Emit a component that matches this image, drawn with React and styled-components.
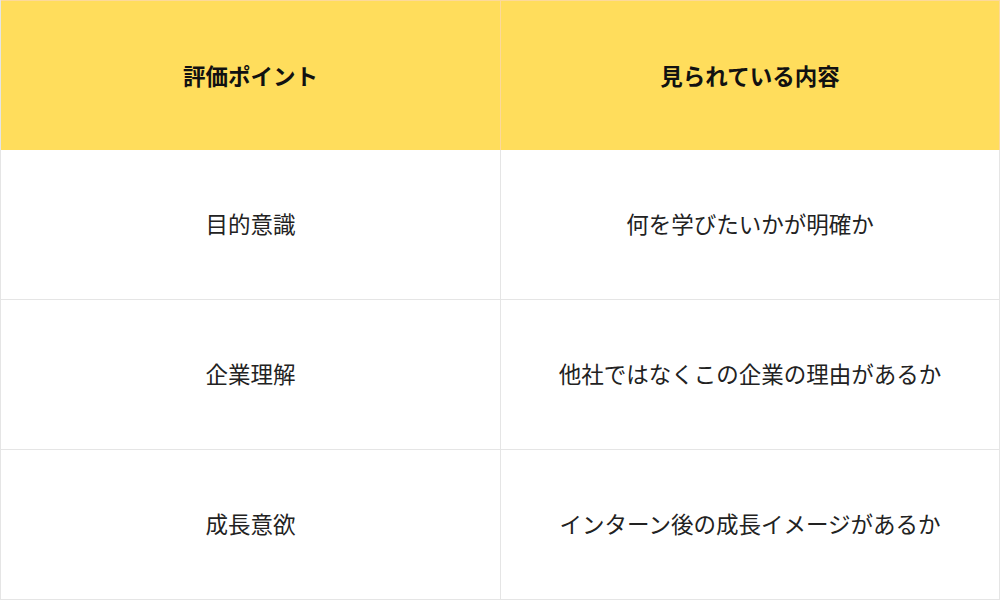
import React from 'react'
import styled, { createGlobalStyle } from 'styled-components';

const GlobalStyle = createGlobalStyle`
  html, body {
    margin: 0;
    padding: 0;
    background: #fff;
  }
  body {
    font-family: "Noto Sans CJK JP", "Noto Sans", sans-serif;
    color: #222;
  }
`

const rows = [
  ['目的意識', '何を学びたいかが明確か'],
  ['企業理解', '他社ではなくこの企業の理由があるか'],
  ['成長意欲', 'インターン後の成長イメージがあるか'],
]

const App = () => {
  return (
    <>
      <GlobalStyle />
      <Table>
        <HeadCell>評価ポイント</HeadCell>
        <HeadCell>見られている内容</HeadCell>
        {rows.map(([point, content]) => (
          <React.Fragment key={point}>
            <Cell>{point}</Cell>
            <Cell>{content}</Cell>
          </React.Fragment>
        ))}
      </Table>
    </>
  )
}

const Table = styled.div`
  width: 1000px;
  height: 600px;
  box-sizing: border-box;
  display: grid;
  grid-template-columns: 500px 499px;
  grid-template-rows: repeat(4, 150px);
  border-left: 1px solid #e5e5e5;
`

const HeadCell = styled.div`
  display: flex;
  align-items: center;
  justify-content: center;
  padding-bottom: 2px;
  box-sizing: border-box;
  background: #ffdd5c;
  border-top: 1px solid #fcd99a;
  border-right: 1px solid #fcd99a;
  font-size: 22.5px;
  font-weight: 700;
  color: #111;
`

const Cell = styled.div`
  display: flex;
  align-items: center;
  justify-content: center;
  padding-bottom: 4px;
  box-sizing: border-box;
  border-right: 1px solid #e5e5e5;
  border-bottom: 1px solid #e5e5e5;
  font-size: 22.5px;
  font-weight: 400;
  color: #222;
`

export default App
